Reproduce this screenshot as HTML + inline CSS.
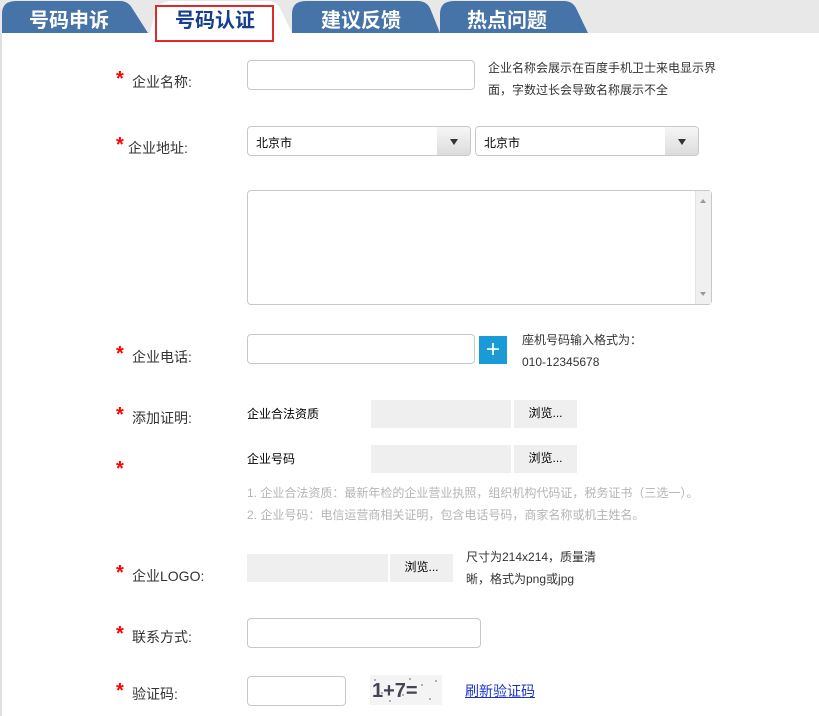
<!DOCTYPE html>
<html><head><meta charset="utf-8"><style>
*{margin:0;padding:0;box-sizing:border-box}
body{width:819px;height:716px;overflow:hidden;background:#fff;font-family:"Liberation Sans","Noto Sans CJK SC",sans-serif;color:#333;position:relative}
.a{position:absolute;white-space:nowrap}
.top{position:absolute;left:0;top:0;width:819px;height:33px;background:#e8e8e8}
.lb{font-size:14px}
.st{color:#f00;font-size:20px;font-weight:bold}
.in{position:absolute;border:1px solid #c8c8c8;border-radius:4px;background:#fff}
.gb{position:absolute;background:#efefef}
.bt{position:absolute;background:#efefef;font-size:12px;color:#000;text-align:center}
.sm{font-size:12px;color:#333}
.gr{font-size:12px;color:#b5b5b5}
.sel{position:absolute;border:1px solid #c8c8c8;border-radius:4px;background:#fff;font-size:12px;color:#000;padding:7px 8px}
.sel i{position:absolute;right:0;top:0;width:33px;height:28px;background:linear-gradient(#f6f6f6,#dcdcdc);border-radius:0 3px 3px 0}
.sel i:after{content:"";position:absolute;left:13px;top:12px;border:4px solid transparent;border-top:6px solid #333;border-bottom:0}
</style></head><body>
<div class="top"></div>
<div style="position:absolute;left:0;top:33px;width:2px;height:683px;background:#e0e0e0"></div>
<svg class="a" style="left:0;top:0" width="600" height="34">
<path d="M2 33 L2 14 Q2 1 16 1 L120 1 Q128 1 132 8 L148 33 Z" fill="#4673a8"/>
<path d="M292 33 L292 14 Q292 1 306 1 L418 1 Q426 1 430 8 L440 33 Z" fill="#4673a8"/>
<path d="M440 33 L440 14 Q440 1 454 1 L564 1 Q572 1 576 8 L588 33 Z" fill="#4673a8"/>
<path d="M150 33 L156 10 Q160 1 172 1 L268 1 Q276 1 280 8 L292 33 Z" fill="#fff"/>
<text x="29" y="27" fill="#fff" font-size="20" font-weight="bold" font-family="Noto Sans CJK SC,sans-serif">号码申诉</text>
<text x="175" y="27" fill="#163f8f" font-size="20" font-weight="bold" font-family="Noto Sans CJK SC,sans-serif">号码认证</text>
<text x="321" y="27" fill="#fff" font-size="20" font-weight="bold" font-family="Noto Sans CJK SC,sans-serif">建议反馈</text>
<text x="467" y="27" fill="#fff" font-size="20" font-weight="bold" font-family="Noto Sans CJK SC,sans-serif">热点问题</text>
</svg>
<div class="a" style="left:155px;top:5px;width:119px;height:37px;border:2px solid #e02a2a"></div>

<div class="a st" style="left:116px;top:68px">*</div><div class="a lb" style="left:132px;top:72px">企业名称:</div>
<div class="in" style="left:247px;top:60px;width:228px;height:30px"></div>
<div class="a sm" style="left:488px;top:57px;line-height:22px">企业名称会展示在百度手机卫士来电显示界<br>面，字数过长会导致名称展示不全</div>

<div class="a st" style="left:116px;top:134px">*</div><div class="a lb" style="left:128px;top:138px">企业地址:</div>
<div class="sel" style="left:247px;top:126px;width:224px;height:30px">北京市<i></i></div>
<div class="sel" style="left:475px;top:126px;width:224px;height:30px">北京市<i></i></div>
<div class="in" style="left:247px;top:190px;width:465px;height:115px"><div style="position:absolute;right:0;top:0;width:16px;height:113px;background:#f0f0f0;border-left:1px solid #e4e4e4"><div style="position:absolute;left:4px;top:8px;border:3px solid transparent;border-bottom:4px solid #999;border-top:0"></div><div style="position:absolute;left:4px;bottom:8px;border:3px solid transparent;border-top:4px solid #999;border-bottom:0"></div></div></div>

<div class="a st" style="left:116px;top:343px">*</div><div class="a lb" style="left:132px;top:347px">企业电话:</div>
<div class="in" style="left:247px;top:334px;width:228px;height:30px"></div>
<div class="a" style="left:479px;top:336px;width:28px;height:28px;background:#1a9ad6;color:#fff;font-size:24px;line-height:27px;text-align:center">+</div>
<div class="a sm" style="left:522px;top:329px;line-height:22px">座机号码输入格式为：<br>010-12345678</div>

<div class="a st" style="left:116px;top:404px">*</div><div class="a lb" style="left:132px;top:408px">添加证明:</div>
<div class="a sm" style="left:247px;top:405px;color:#000">企业合法资质</div>
<div class="gb" style="left:371px;top:400px;width:140px;height:28px"></div>
<div class="bt" style="left:514px;top:400px;width:63px;height:28px;line-height:26px">浏览...</div>
<div class="a st" style="left:116px;top:458px">*</div>
<div class="a sm" style="left:247px;top:450px;color:#000">企业号码</div>
<div class="gb" style="left:371px;top:445px;width:140px;height:28px"></div>
<div class="bt" style="left:514px;top:445px;width:63px;height:28px;line-height:26px">浏览...</div>
<div class="a gr" style="left:247px;top:482px;line-height:22px">1. 企业合法资质：最新年检的企业营业执照，组织机构代码证，税务证书（三选一）。<br>2. 企业号码：电信运营商相关证明，包含电话号码，商家名称或机主姓名。</div>

<div class="a st" style="left:116px;top:562px">*</div><div class="a lb" style="left:132px;top:566px">企业LOGO:</div>
<div class="gb" style="left:247px;top:554px;width:141px;height:28px"></div>
<div class="bt" style="left:390px;top:554px;width:63px;height:28px;line-height:26px">浏览...</div>
<div class="a sm" style="left:466px;top:546px;line-height:22px">尺寸为214x214，质量清<br>晰，格式为png或jpg</div>

<div class="a st" style="left:116px;top:623px">*</div><div class="a lb" style="left:132px;top:627px">联系方式:</div>
<div class="in" style="left:247px;top:618px;width:234px;height:30px"></div>

<div class="a st" style="left:116px;top:680px">*</div><div class="a lb" style="left:132px;top:684px">验证码:</div>
<div class="in" style="left:247px;top:676px;width:99px;height:30px"></div>
<svg class="a" style="left:370px;top:675px" width="72" height="30"><rect width="72" height="30" fill="#f4f4f4"/>
<g fill="#999"><circle cx="5" cy="5" r="1"/><circle cx="20" cy="26" r="1"/><circle cx="40" cy="4" r="1"/><circle cx="60" cy="24" r="1"/><circle cx="33" cy="20" r="1"/><circle cx="52" cy="10" r="1"/><circle cx="12" cy="18" r="1"/><circle cx="66" cy="6" r="1"/></g>
<text x="2" y="22" font-size="20" font-weight="bold" fill="#445" font-family="Liberation Sans">1+7=</text></svg>
<div class="a" style="left:465px;top:681px;font-size:14px;color:#1a33cc;text-decoration:underline">刷新验证码</div>
</body></html>
